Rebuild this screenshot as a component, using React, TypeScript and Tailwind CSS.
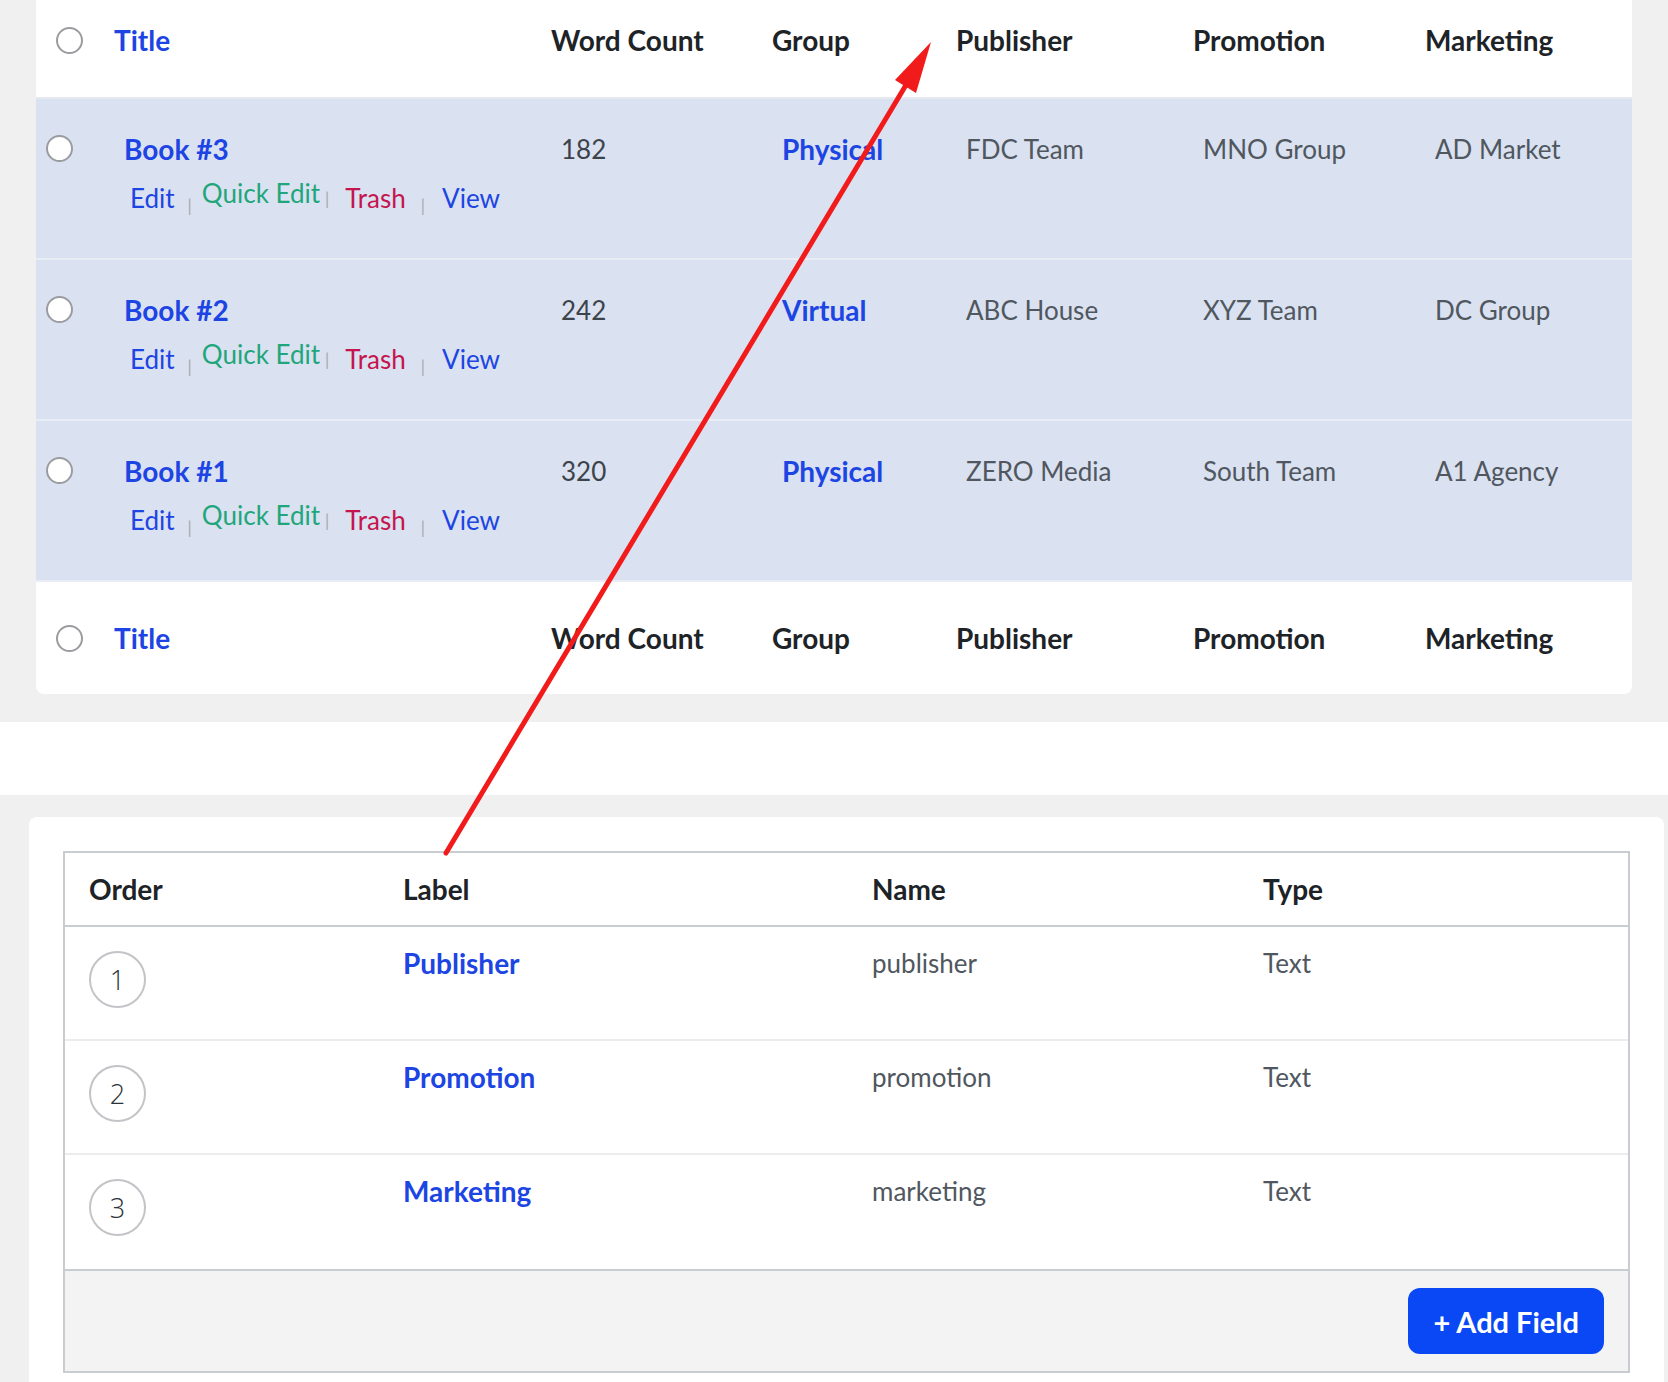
const books = [
  { title: "Book #3", words: 182, group: "Physical", publisher: "FDC Team", promotion: "MNO Group", marketing: "AD Market" },
  { title: "Book #2", words: 242, group: "Virtual", publisher: "ABC House", promotion: "XYZ Team", marketing: "DC Group" },
  { title: "Book #1", words: 320, group: "Physical", publisher: "ZERO Media", promotion: "South Team", marketing: "A1 Agency" },
];

const fields = [
  { order: 1, label: "Publisher", name: "publisher", type: "Text" },
  { order: 2, label: "Promotion", name: "promotion", type: "Text" },
  { order: 3, label: "Marketing", name: "marketing", type: "Text" },
];

const Radio = ({ className = "" }: { className?: string }) => (
  <span className={"block w-[27px] h-[27px] rounded-full border-2 border-[#9a9ca0] bg-white " + className} />
);

const HeadRow = ({ className = "" }: { className?: string }) => (
  <div
    className={
      "grid grid-cols-[58px_437px_221px_184px_237px_232px_1fr] items-center pl-[20px] text-[28px] leading-[34px] font-bold text-[#1d2327] " +
      className
    }
  >
    <Radio />
    <span className="text-[#1c45e3]">Title</span>
    <span>Word Count</span>
    <span>Group</span>
    <span>Publisher</span>
    <span>Promotion</span>
    <span>Marketing</span>
  </div>
);

const Sep = ({ className = "" }: { className?: string }) => (
  <span className={"text-[17px] text-[#a7aaad] " + className}>|</span>
);

export default function App() {
  return (
    <div className="relative w-[1668px] h-[1382px] overflow-hidden bg-white font-['Lato',sans-serif]">
      {/* posts list */}
      <div className="bg-[#f0f0f1] px-[36px] pb-[28px]">
        <div className="bg-white rounded-b-lg overflow-hidden">
          <HeadRow className="h-[99px] pb-[17px] border-b-2 border-[#e6e9ef]" />
          {books.map((b) => (
            <div
              key={b.title}
              className="grid grid-cols-[78px_437px_221px_184px_237px_232px_1fr] items-start h-[161px] pl-[10px] pt-[33px] bg-[#dae1f1] border-b-2 border-[#e9edf6] text-[26px] leading-[34px] text-[#50575e]"
            >
              <Radio className="mt-[3px]" />
              <div>
                <div className="text-[28px] font-bold text-[#1c45e3]">{b.title}</div>
                <div className="mt-[11px] leading-[32px] whitespace-nowrap">
                  <span className="ml-[6px] text-[#1c45e3]">Edit</span>
                  <Sep className="ml-[13px] align-[-4px]" />
                  <span className="ml-[10px] text-[#1fa67a] align-[5px]">Quick Edit</span>
                  <Sep className="ml-[5px] align-[3px]" />
                  <span className="ml-[16px] text-[#c4154f]">Trash</span>
                  <Sep className="ml-[15px] align-[-4px]" />
                  <span className="ml-[17px] text-[#1c45e3]">View</span>
                </div>
              </div>
              <span className="text-[#3c434a]">{b.words}</span>
              <span className="text-[28px] font-bold text-[#1c45e3]">{b.group}</span>
              <span>{b.publisher}</span>
              <span>{b.promotion}</span>
              <span>{b.marketing}</span>
            </div>
          ))}
          <HeadRow className="h-[112px]" />
        </div>
      </div>

      <div className="h-[73px] bg-white" />

      {/* custom fields */}
      <div className="bg-[#f0f0f1] pl-[29px] pr-[4px] pt-[22px] h-[600px]">
        <div className="bg-white rounded-t-lg h-full px-[34px] pt-[34px]">
          <div className="border-2 border-[#c9ccd0]">
            <div className="grid grid-cols-[314px_469px_391px_1fr] items-center h-[74px] pl-[24px] border-b-2 border-[#c9ccd0] text-[28px] leading-[34px] font-bold text-[#1d2327]">
              <span>Order</span>
              <span>Label</span>
              <span>Name</span>
              <span>Type</span>
            </div>
            {fields.map((f, i) => (
              <div
                key={f.name}
                className={
                  "grid grid-cols-[314px_469px_391px_1fr] items-start h-[114px] pl-[24px] pt-[19px] text-[26px] leading-[34px] text-[#50575e] " +
                  (i < fields.length - 1 ? "border-b-2 border-[#ececec]" : "")
                }
              >
                <span className="mt-[5px] flex items-center justify-center w-[57px] h-[57px] rounded-full border-2 border-[#c2c4c7] font-['Open_Sans',sans-serif] font-light text-[27px] text-[#2c3338]">
                  {f.order}
                </span>
                <span className="text-[28px] font-bold text-[#1c45e3]">{f.label}</span>
                <span>{f.name}</span>
                <span>{f.type}</span>
              </div>
            ))}
            <div className="flex justify-end border-t-2 border-[#c9ccd0] bg-[#f3f3f3] px-[24px] py-[17px]">
              <button className="h-[66px] px-[25px] rounded-[12px] bg-[#0a48f5] text-white text-[29px] font-bold leading-none">
                + Add Field
              </button>
            </div>
          </div>
        </div>
      </div>

      {/* annotation arrow */}
      <svg className="absolute inset-0 pointer-events-none" width="1668" height="1382" viewBox="0 0 1668 1382">
        <line x1="446" y1="853" x2="906" y2="85" stroke="#f21b1b" strokeWidth="5" strokeLinecap="round" />
        <polygon points="931,42 916,93 895,80" fill="#f21b1b" />
      </svg>
    </div>
  );
}
